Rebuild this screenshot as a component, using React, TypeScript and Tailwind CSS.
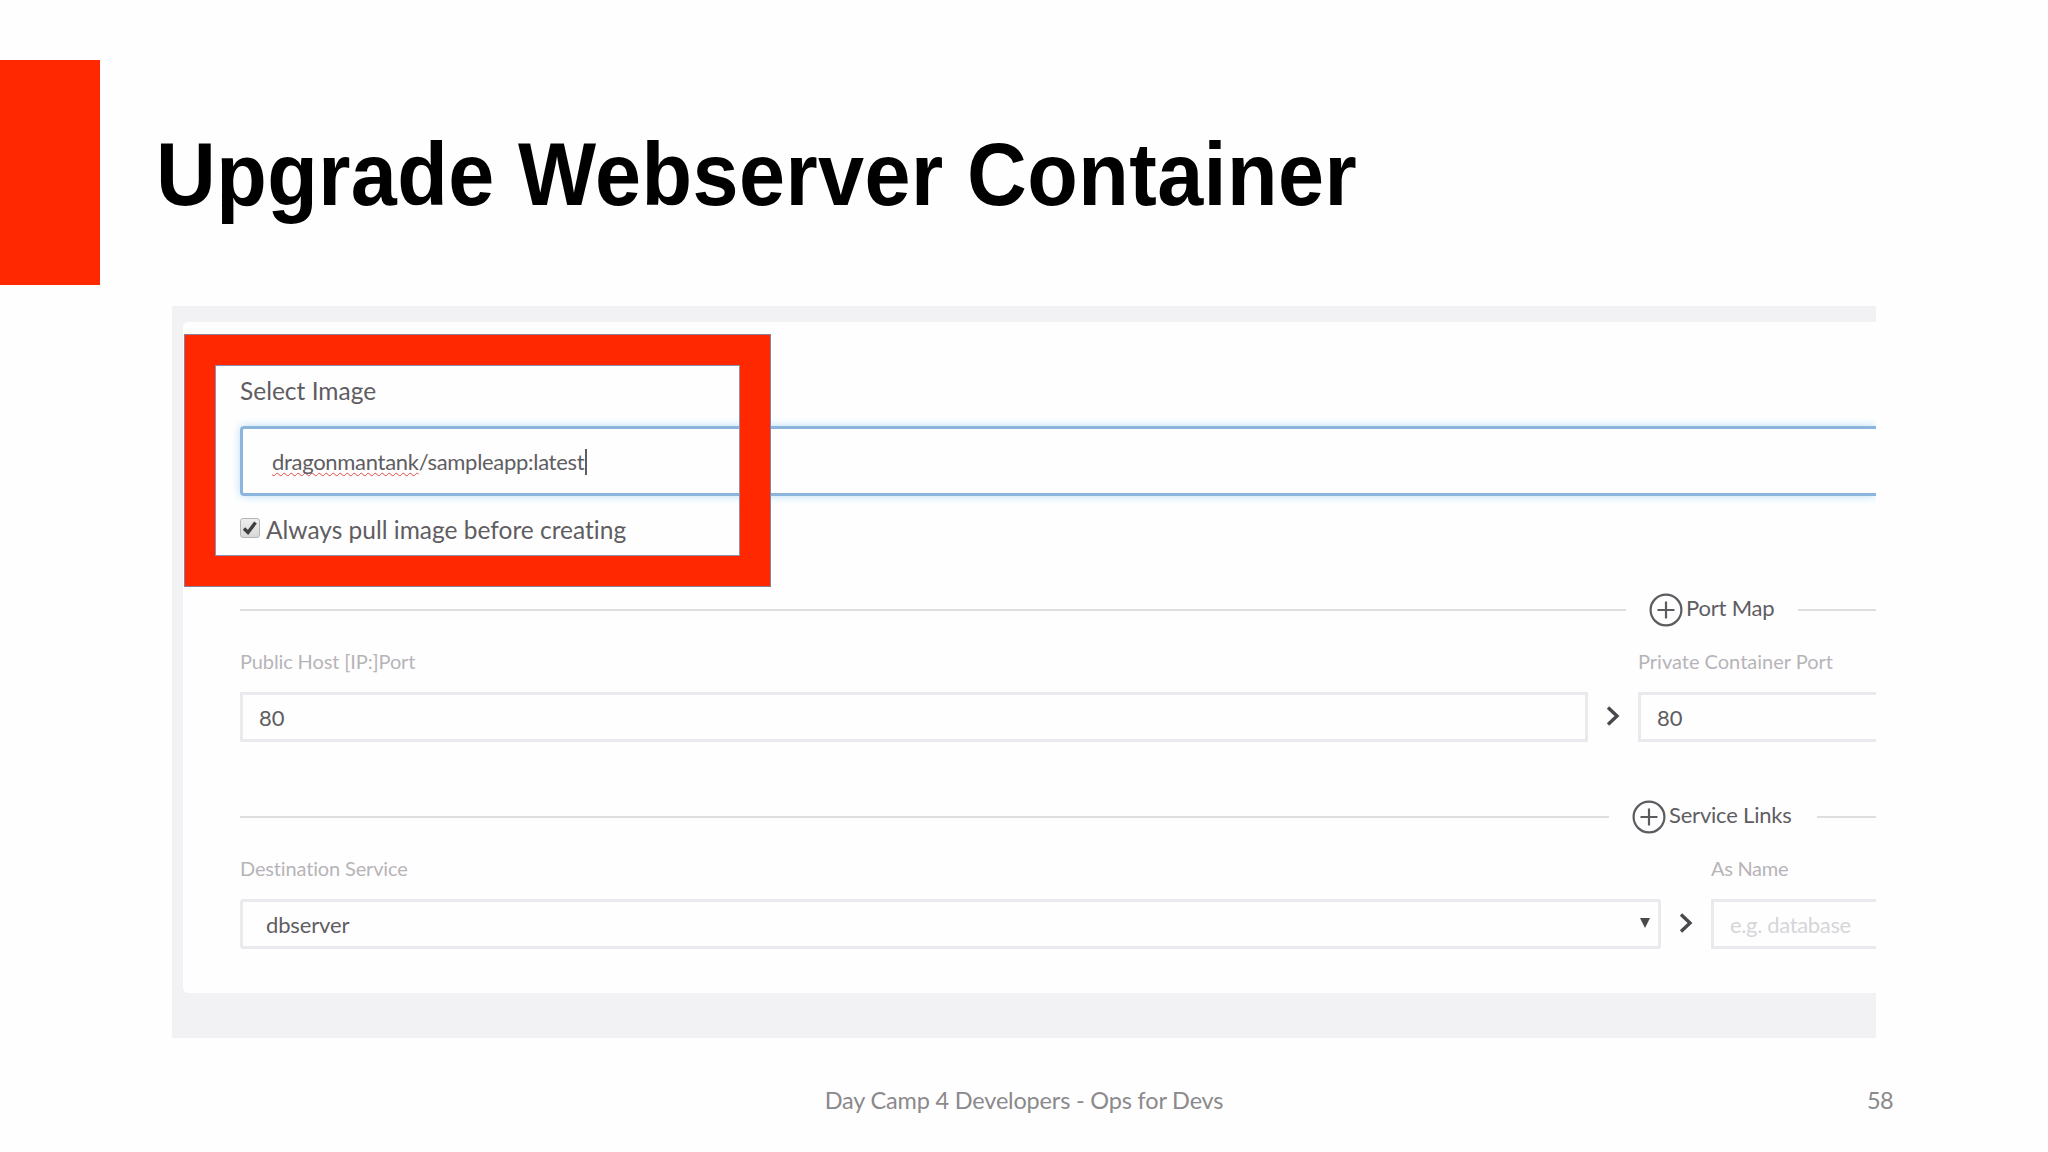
import type { ReactNode } from 'react'

function Chevron() {
  return (
    <svg viewBox="0 0 14 20" className="w-[14px] h-[20px] -mt-[2px]" fill="none" stroke="#4a484d" strokeWidth="3.4">
      <path d="M2 1.5 L11 10 L2 18.5" />
    </svg>
  )
}

function PlusCircle() {
  return (
    <svg viewBox="0 0 34 34" className="w-[34px] h-[34px] shrink-0" fill="none" stroke="#5c5b60" strokeWidth="2.2">
      <circle cx="17" cy="17" r="15.4" />
      <path d="M17 8.5 V25.5 M8.5 17 H25.5" />
    </svg>
  )
}

interface DividerProps { lineClass: string; titleClass: string; title: string }

function Divider({ lineClass, titleClass, title }: DividerProps) {
  return (
    <div className="flex items-center h-[34px]">
      <div className={`h-[2px] bg-[#dedde0] shrink-0 ${lineClass}`} />
      <PlusCircle />
      <div className={`text-[22px] leading-[30px] text-[#5f5d62] tracking-[-0.2px] whitespace-nowrap shrink-0 -mt-[5px] ml-[3px] ${titleClass}`}>{title}</div>
      <div className="h-[2px] bg-[#dedde0] flex-1" />
    </div>
  )
}

function Label({ children, className = '' }: { children: ReactNode; className?: string }) {
  return <div className={`text-[20px] leading-[24px] text-[#b7b4b9] whitespace-nowrap shrink-0 ${className}`}>{children}</div>
}

function Field({ children, className = '' }: { children: ReactNode; className?: string }) {
  return (
    <div className={`flex items-center h-[50px] border-[3px] border-[#ebe9ed] pt-px text-[22px] leading-[28px] text-[#5f5d62] ${className}`}>
      {children}
    </div>
  )
}

function ServiceForm() {
  return (
    <div className="flex flex-col bg-[#fefefe] rounded-l-[5px] h-[671px] pt-[54px] pl-[57px] overflow-hidden">
      <div className="text-[24.5px] leading-[30px] text-[#5f5d62]">Select Image</div>
      <div className="flex items-center mt-[20px] h-[70px] shrink-0 border-[3px] border-r-0 border-[#8bb5dc] rounded-l-[4px] pl-[29px] shadow-[0_0_10px_#b9dff8]">
        <div className="text-[22px] leading-[28px] text-[#5f5d62] tracking-[-0.3px] whitespace-nowrap mt-px">
          <span className="underline decoration-wavy decoration-[#e5484d] decoration-[1px] underline-offset-[2px] [text-decoration-skip-ink:none]">dragonmantank</span>/sampleapp:latest
        </div>
        <div className="w-[2px] h-[26px] bg-[#5f5d62] ml-px mt-px" />
      </div>
      <div className="flex items-center mt-[18px] h-[30px]">
        <div className="flex items-center justify-center w-[20px] h-[20px] rounded-[3px] border border-[#b5b5b5] bg-linear-to-b from-[#eeeeee] to-[#d8d8d8] -mt-[2px]">
          <svg viewBox="0 0 16 16" className="w-[16px] h-[16px]" fill="none" stroke="#3f3f42" strokeWidth="3.4">
            <path d="M2 8.5 L6 12.5 L13.5 2.5" />
          </svg>
        </div>
        <div className="ml-[6px] mt-[2px] text-[24.5px] leading-[30px] text-[#5f5d62]">Always pull image before creating</div>
      </div>

      <div className="mt-[49px]">
        <Divider lineClass="w-[1386px] mr-[23px]" titleClass="mr-[24px]" title="Port Map" />
      </div>
      <div className="flex mt-[22px]">
        <Label className="w-[1398px] tracking-[-0.12px]">Public Host [IP:]Port</Label>
        <Label>Private Container Port</Label>
      </div>
      <div className="flex items-center mt-[19px]">
        <Field className="w-[1348px] shrink-0 pl-[16px]">80</Field>
        <div className="w-[50px] shrink-0 flex justify-center"><Chevron /></div>
        <Field className="flex-1 border-r-0 pl-[16px]">80</Field>
      </div>

      <div className="mt-[58px]">
        <Divider lineClass="w-[1369px] mr-[23px]" titleClass="mr-[25px]" title="Service Links" />
      </div>
      <div className="flex mt-[22px]">
        <Label className="w-[1471px] tracking-[-0.15px]">Destination Service</Label>
        <Label className="tracking-[-0.3px]">As Name</Label>
      </div>
      <div className="flex items-center mt-[19px]">
        <Field className="w-[1421px] shrink-0 pl-[23px] pr-[8px] justify-between rounded-[3px]">
          <span className="tracking-[-0.15px]">dbserver</span>
          <svg viewBox="0 0 10 10" className="w-[10px] h-[10px] -mt-[4px]" fill="#4a484d"><path d="M0 0 H10 L5 10 Z" /></svg>
        </Field>
        <div className="w-[50px] shrink-0 flex justify-center"><Chevron /></div>
        <Field className="flex-1 border-r-0 pl-[16px]">
          <span className="text-[#d7d5d9] tracking-[-0.35px]">e.g. database</span>
        </Field>
      </div>
    </div>
  )
}

export default function App() {
  return (
    <div className="w-[2048px] h-[1152px] bg-[#fefefe] overflow-hidden flex flex-col font-[Lato,sans-serif] [font-variant-ligatures:none]">
      <header className="flex mt-[60px] h-[225px] shrink-0">
        <div className="w-[100px] h-[225px] bg-[#ff2800]" />
        <h1 className="ml-[56px] mt-[54px] text-[89px] leading-[120px] tracking-[0.45px] font-bold text-black whitespace-nowrap origin-left scale-x-[0.93] font-['Liberation_Sans',sans-serif]">
          Upgrade Webserver Container
        </h1>
      </header>

      <main className="relative mt-[21px] ml-[172px] w-[1704px] h-[732px] shrink-0 bg-[#f2f1f4] pt-[16px] pl-[11px]">
        <ServiceForm />
        {/* highlight frame over the image selector */}
        <div className="absolute left-[12px] top-[28px] w-[587px] h-[253px] border border-[#8c7f9e] bg-transparent">
          <div className="w-full h-full border-[30px] border-[#ff2800]">
            <div className="w-full h-full border border-[#8c8fb4]" />
          </div>
        </div>
      </main>

      <footer className="grid grid-cols-[172px_1704px_172px] mt-[47px] text-[23.5px] leading-[30px] tracking-[-0.18px] text-[#8b898c]">
        <div className="col-start-2 text-center">Day Camp 4 Developers - Ops for Devs</div>
        <div className="-ml-[9px] tracking-[-0.6px]">58</div>
      </footer>
    </div>
  )
}
